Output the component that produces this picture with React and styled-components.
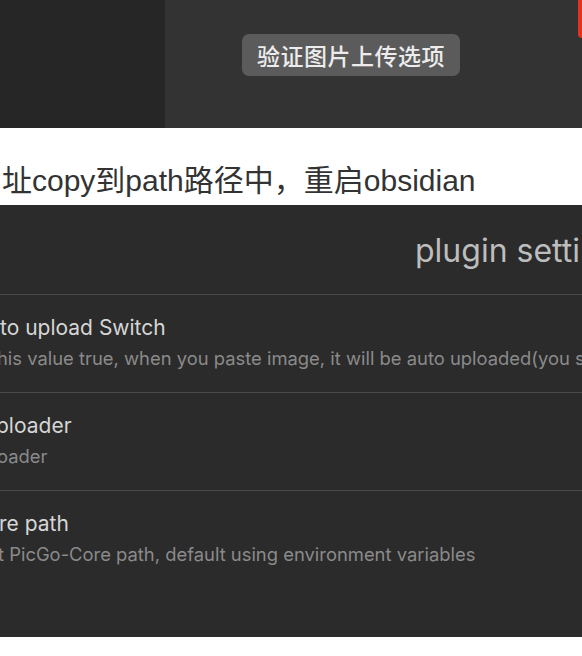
import styled, { createGlobalStyle } from "styled-components";

const GlobalStyle = createGlobalStyle`
  html, body {
    margin: 0;
    padding: 0;
    background: #ffffff;
  }
  body {
    width: 582px;
    overflow: hidden;
  }
`;

const settings = [
  {
    name: "to upload Switch",
    nameCut: 0,
    desc: "his value true, when you paste image, it will be auto uploaded(you should set the picGo server rightly)",
    descCut: -3,
  },
  { name: "ploader", nameCut: -4, desc: "oader", descCut: -3 },
  {
    name: "re path",
    nameCut: -1,
    desc: "t PicGo-Core path, default using environment variables",
    descCut: -2,
  },
];

const App = () => {
  return (
    <Page>
      <GlobalStyle />
      <TopShot>
        <Sidebar />
        <ModalArea>
          <CutLine>图片（选</CutLine>
          <VerifyButton>验证图片上传选项</VerifyButton>
          <CloseTab />
        </ModalArea>
      </TopShot>

      <Caption>址copy到path路径中，重启obsidian</Caption>

      <SettingsShot>
        <Heading>plugin settings</Heading>
        {settings.map((item, i) => (
          <Item key={i} last={i === settings.length - 1}>
            <Name cut={item.nameCut}>{item.name}</Name>
            <Desc cut={item.descCut}>{item.desc}</Desc>
          </Item>
        ))}
      </SettingsShot>
    </Page>
  );
};

const Page = styled.main`
  width: 582px;
  height: 656px;
  overflow: hidden;
  display: flex;
  flex-direction: column;
`;

const TopShot = styled.section`
  height: 128px;
  display: flex;
  flex-shrink: 0;
`;

const Sidebar = styled.div`
  width: 165px;
  background: #262626;
`;

const ModalArea = styled.div`
  flex: 1;
  position: relative;
  overflow: hidden;
  background: #333333;
  display: flex;
  flex-direction: column;
  align-items: flex-start;
  padding-left: 77px;
`;

const CutLine = styled.div`
  margin-top: -26px;
  height: 27px;
  font-family: "Noto Sans CJK SC", sans-serif;
  font-size: 22px;
  line-height: 27px;
  color: #e6e6e6;
  letter-spacing: 2px;
  white-space: nowrap;
`;

const VerifyButton = styled.div`
  margin-top: 33px;
  height: 42px;
  width: 218px;
  border-radius: 7px;
  background: #5b5b5b;
  color: #ececec;
  display: flex;
  align-items: center;
  justify-content: center;
  font-family: "Noto Sans CJK SC", sans-serif;
  font-size: 23px;
  font-weight: 500;
  letter-spacing: 0.5px;
  white-space: nowrap;
`;

const CloseTab = styled.div`
  position: absolute;
  top: 0;
  right: 0;
  width: 4px;
  height: 38px;
  background: #e5321f;
  border-bottom-left-radius: 4px;
`;

const Caption = styled.p`
  margin: 0;
  height: 77px;
  box-sizing: border-box;
  padding: 33px 0 0 2px;
  font-family: "Liberation Sans", "Noto Sans CJK SC", sans-serif;
  font-size: 30px;
  line-height: 40px;
  color: #333333;
  white-space: nowrap;
  flex-shrink: 0;
`;

const SettingsShot = styled.section`
  height: 432px;
  flex-shrink: 0;
  background: #2b2b2b;
  overflow: hidden;
  font-family: Inter, "Noto Sans", sans-serif;
`;

const Heading = styled.h2`
  margin: 0;
  padding: 26px 0 23px 415px;
  font-size: 32px;
  font-weight: 400;
  line-height: 40px;
  color: #bdbdbd;
  white-space: nowrap;
  border-bottom: 1px solid #4a4a4a;
`;

const Item = styled.div`
  padding: 20px 0 22px;
  display: flex;
  flex-direction: column;
  gap: 7px;
  border-bottom: ${({ last }) => (last ? "none" : "1px solid #4a4a4a")};
  white-space: nowrap;
`;

const Name = styled.div`
  margin-left: ${({ cut }) => cut}px;
  font-size: 21px;
  line-height: 25px;
  color: #d6d6d6;
`;

const Desc = styled.div`
  margin-left: ${({ cut }) => cut}px;
  font-size: 18.4px;
  line-height: 23px;
  color: #8a8a8a;
`;

export default App;
